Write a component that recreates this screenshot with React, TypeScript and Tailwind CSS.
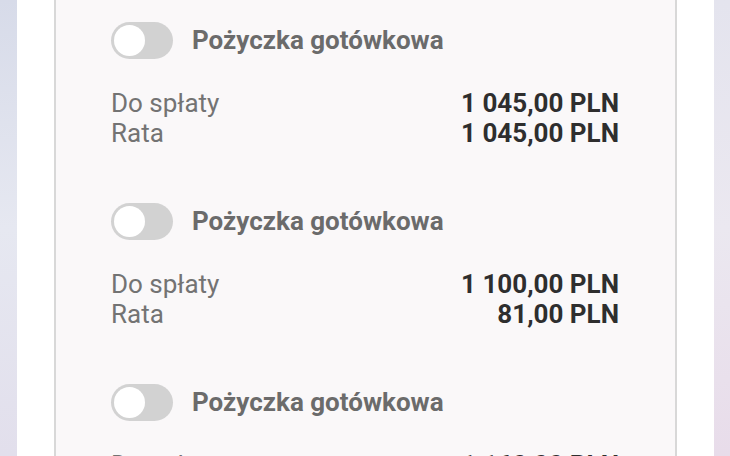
const loans = [
  { total: "1 045,00 PLN", rate: "1 045,00 PLN" },
  { total: "1 100,00 PLN", rate: "81,00 PLN" },
  { total: "1 160,00 PLN", rate: "90,00 PLN" },
];

function Toggle() {
  return (
    <div className="flex h-[37px] w-[62px] shrink-0 items-center rounded-full bg-[#d2d2d2] pl-[3px]">
      <div className="h-[31px] w-[31px] rounded-full bg-white" />
    </div>
  );
}

export default function App() {
  return (
    <div className="flex h-[456px] w-[730px] overflow-hidden font-['Roboto',sans-serif]">
      {/* side backdrop */}
      <div className="w-[17px] shrink-0 bg-gradient-to-b from-[#d7dbe9] via-[#e6e8f1] to-[#e2dfec]" />

      <div className="flex-1 bg-white px-[37px]">
        <div className="h-full border-x-2 border-[#d8d8d8] bg-[#faf8f9] pl-[55px] pr-[56px] pt-[22px]">
          {loans.map((loan, i) => (
            <div key={i} className={i > 0 ? "mt-[55px]" : ""}>
              <div className="flex items-center gap-[19px]">
                <Toggle />
                <span className="text-[26px] font-bold leading-[37px] text-[#6b6b6b]">
                  Pożyczka gotówkowa
                </span>
              </div>
              <div className="mt-[29px] text-[26px] leading-[30px]">
                <div className="flex justify-between">
                  <span className="text-[#737373]">Do spłaty</span>
                  <span className="font-bold text-[#2e2e2e]">{loan.total}</span>
                </div>
                <div className="flex justify-between">
                  <span className="text-[#737373]">Rata</span>
                  <span className="font-bold text-[#2e2e2e]">{loan.rate}</span>
                </div>
              </div>
            </div>
          ))}
        </div>
      </div>

      <div className="w-[16px] shrink-0 bg-gradient-to-b from-[#e4e4ee] via-[#ebe8f0] to-[#e8dcea]" />
    </div>
  );
}
